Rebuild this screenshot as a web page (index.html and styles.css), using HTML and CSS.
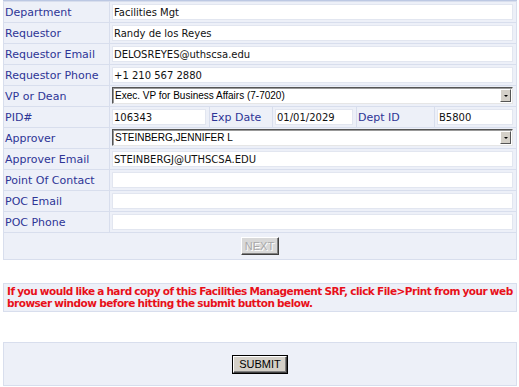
FILE: index.html
```html
<!DOCTYPE html>
<html lang="en">
 <head>
  <meta charset="utf-8"/>
  <title>Facilities Management SRF</title>
  <link rel="stylesheet" href="styles.css">
 </head>
 <body>
  <table class="form">
   <colgroup>
    <col class="c-label">
    <col class="c-pid">
    <col class="c-exp">
    <col class="c-date">
    <col class="c-dept">
    <col class="c-id">
   </colgroup>
   <tr>
    <th>Department</th>
    <td colspan="5"><input class="txt" type="text" value="Facilities Mgt"></td>
   </tr>
   <tr>
    <th>Requestor</th>
    <td colspan="5"><input class="txt" type="text" value="Randy de los Reyes"></td>
   </tr>
   <tr>
    <th>Requestor Email</th>
    <td colspan="5"><input class="txt" type="text" value="DELOSREYES@uthscsa.edu"></td>
   </tr>
   <tr>
    <th>Requestor Phone</th>
    <td colspan="5"><input class="txt" type="text" value="+1 210 567 2880"></td>
   </tr>
   <tr>
    <th>VP or Dean</th>
    <td colspan="5">
     <span class="sel">
      <select>
       <option>Exec. VP for Business Affairs (7-7020)</option>
      </select>
     </span>
    </td>
   </tr>
   <tr>
    <th>PID#</th>
    <td><input class="txt" type="text" value="106343"></td>
    <th>Exp Date</th>
    <td><input class="txt" type="text" value="01/01/2029"></td>
    <th>Dept ID</th>
    <td><input class="txt" type="text" value="B5800"></td>
   </tr>
   <tr>
    <th>Approver</th>
    <td colspan="5">
     <span class="sel">
      <select>
       <option>STEINBERG,JENNIFER L</option>
      </select>
     </span>
    </td>
   </tr>
   <tr>
    <th>Approver Email</th>
    <td colspan="5"><input class="txt" type="text" value="STEINBERGJ@UTHSCSA.EDU"></td>
   </tr>
   <tr>
    <th>Point Of Contact</th>
    <td colspan="5"><input class="txt" type="text" value=""></td>
   </tr>
   <tr>
    <th>POC Email</th>
    <td colspan="5"><input class="txt" type="text" value=""></td>
   </tr>
   <tr>
    <th>POC Phone</th>
    <td colspan="5"><input class="txt" type="text" value=""></td>
   </tr>
   <tr>
    <td colspan="6" class="actions"><button class="btn btn-next" type="button" disabled>NEXT</button></td>
   </tr>
  </table>

  <div class="notice">
   If you would like a hard copy of this Facilities Management SRF, click File&gt;Print from your web<br>
   browser window before hitting the submit button below.
  </div>

  <div class="submit-box">
   <button class="btn btn-submit" type="submit">SUBMIT</button>
  </div>
 </body>
</html>
```

FILE: styles.css
```css
:root {
  --cell: #edf0f8;
  --line: #d8deed;
  --label: #2e3596;
  --font: "DejaVu Sans", Verdana, sans-serif;
  --ctl: "Liberation Sans", Arial, sans-serif;
}

body {
  margin: 0;
  padding: 0 2px 0 3px;
  background: #fff;
  font-family: var(--font);
  font-size: 11px;
}

/* form grid */
.form {
  width: 514px;
  table-layout: fixed;
  border-collapse: separate;
  border-spacing: 1px;
  background: var(--line);
  border-top: 1px solid #bcc8e3;
}

.c-label { width: 105px; }
.c-pid { width: 99px; }
.c-exp { width: 62px; }
.c-date { width: 83px; }
.c-dept { width: 77px; }
.c-id { width: 81px; }

.form th,
.form td {
  background: var(--cell);
  height: 16px;
  padding: 2px 3px 2px 2px;
  text-align: left;
  font-weight: normal;
  white-space: nowrap;
}

.form th {
  color: var(--label);
  padding-left: 1px;
}

.txt {
  display: block;
  width: 100%;
  height: 16px;
  box-sizing: border-box;
  margin: 0;
  padding: 0 1px;
  border: 1px solid #e2e6f0;
  background: #fff;
  color: #111;
  font-family: var(--font);
  font-size: 10px;
}

/* fake classic select */
.sel {
  position: relative;
  display: block;
}

.sel select {
  display: block;
  width: 100%;
  height: 17px;
  margin: -1px 0 0;
  padding: 0 14px 0 2px;
  box-sizing: border-box;
  appearance: none;
  -webkit-appearance: none;
  border: 1px solid;
  border-color: #555 #e6e6e6 #e6e6e6 #555;
  box-shadow: inset 1px 1px 0 #999;
  border-radius: 0;
  background: #fff;
  color: #000;
  font-family: var(--ctl);
  font-size: 10px;
}

.sel::after {
  content: "";
  position: absolute;
  top: 2px;
  right: 2px;
  width: 9px;
  height: 11px;
  background: #d4d0c8;
  border: 1px solid;
  border-color: #fff #555 #555 #fff;
  pointer-events: none;
}

.sel::before {
  content: "";
  position: absolute;
  top: 8px;
  right: 5px;
  z-index: 1;
  border-left: 2px solid transparent;
  border-right: 2px solid transparent;
  border-top: 2px solid #000;
  pointer-events: none;
}

.actions {
  text-align: center !important;
  height: 22px !important;
}

/* buttons */
.btn {
  font-family: var(--ctl);
  font-size: 11px;
  background: #d4d0c8;
  border: 1px solid;
  border-color: #fff #404040 #404040 #fff;
  box-shadow: inset -1px -1px 0 #808080;
  padding: 0;
}

.btn-next {
  width: 38px;
  height: 18px;
  margin-top: -1px;
  color: #a8a8a8;
  text-shadow: 1px 1px 0 #fff;
  background: #d8d8d8;
}

/* notice */
.notice {
  margin-top: 23px;
  width: 514px;
  box-sizing: border-box;
  padding: 1px 2px 2px 3px;
  background: var(--cell);
  border: 1px solid var(--line);
  color: #e8101a;
  font-size: 10.5px;
  font-weight: bold;
  line-height: 12px;
  letter-spacing: -0.5px;
  word-spacing: -0.5px;
  white-space: nowrap;
  overflow: hidden;
}

.submit-box {
  margin-top: 30px;
  width: 514px;
  height: 44px;
  box-sizing: border-box;
  display: flex;
  align-items: center;
  justify-content: center;
  background: var(--cell);
  border: 1px solid var(--line);
}

.btn-submit {
  width: 54px;
  height: 17px;
  color: #000;
  outline: 1px solid #000;
  outline-offset: 0;
}
```
